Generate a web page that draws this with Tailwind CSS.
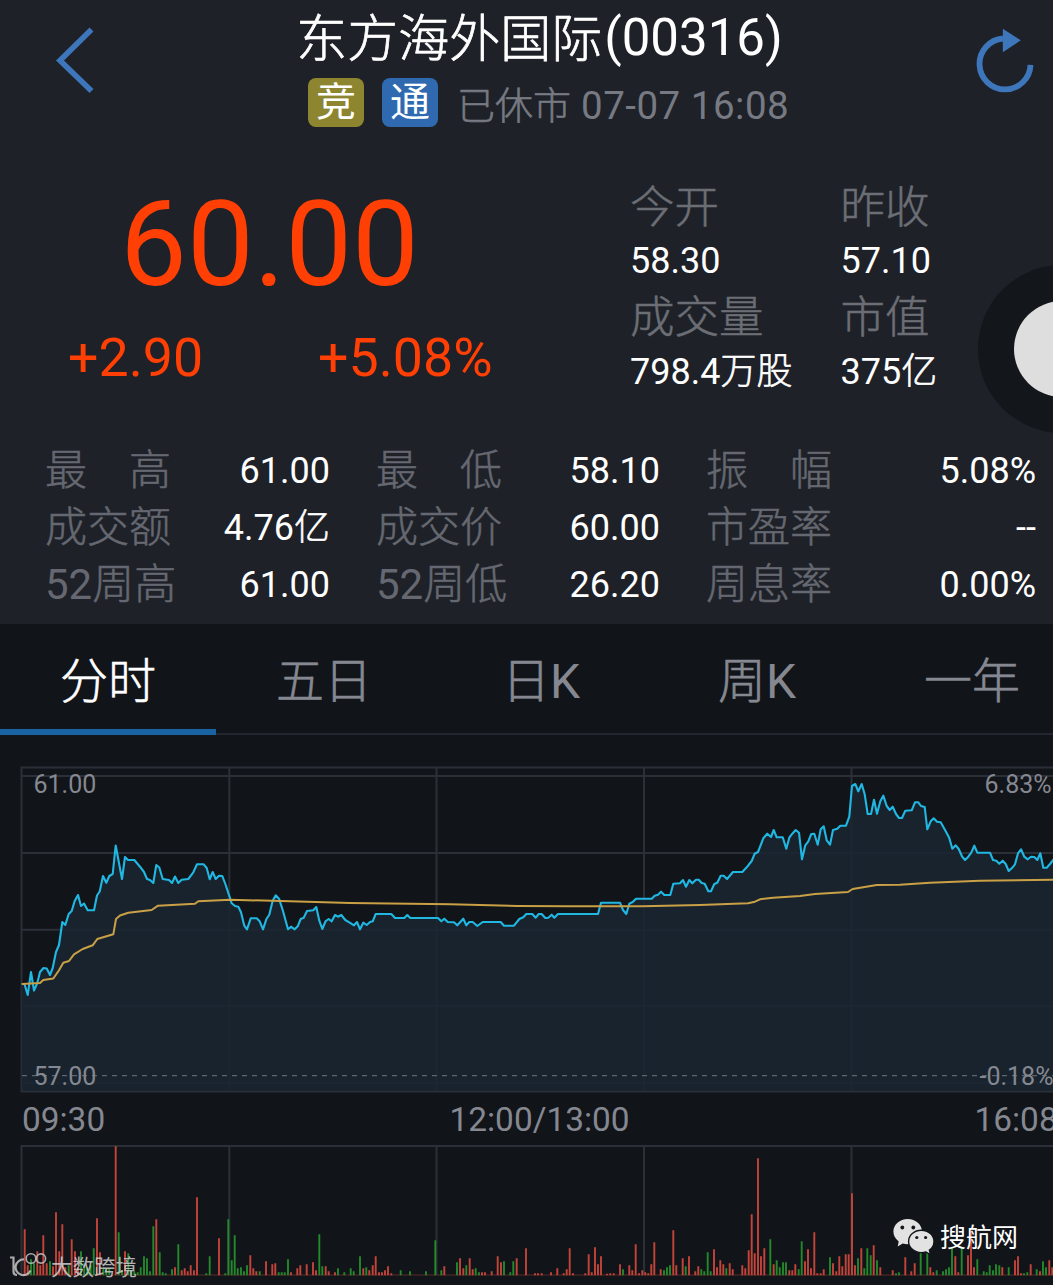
<!DOCTYPE html>
<html lang="zh-CN">
  <head>
    <meta charset="UTF-8" />
    <meta name="viewport" content="width=device-width, initial-scale=1.0" />
    <title>东方海外国际(00316)</title>
    <script src="https://cdn.jsdelivr.net/npm/@tailwindcss/browser@4"></script>
  </head>
  <body class="bg-[#111419] overflow-hidden">
    <div
      class="relative w-[1053px] h-[1285px] overflow-hidden font-[Roboto,'Noto_Sans_CJK_SC',sans-serif] whitespace-nowrap"
    >
      <div class="w-[1080px]">
        <section class="h-[624px] bg-[#1e2128]">
          <!-- Cabecera -->
          <header class="grid grid-cols-[200px_680px_200px] h-[170px]">
            <svg class="w-[120px] h-[120px]" viewBox="0 0 120 120" fill="none" stroke="#3d76ba" stroke-width="5.6">
              <path d="M91.500 29.500 60 60.500l31.500 30.500" />
            </svg>
            <div class="pt-2">
              <h1 class="text-[51px] leading-[60px] text-white text-center font-light pl-px">
                <span class="relative top-0.5 right-0.5 [-webkit-text-stroke:0.7px]">东方海外国际</span><span class="font-normal">(00316)</span>
              </h1>
              <div class="flex items-start pl-[108px] pt-2.5">
                <span class="w-14 h-[49px] rounded-lg bg-[#8e8530] text-white text-[40px] leading-[50px] text-center">竞</span>
                <span class="w-14 h-[49px] rounded-lg bg-[#2f6ab0] text-white text-[40px] leading-[50px] text-center ml-[18px]">通</span>
                <span class="ml-[19px] mt-[3px] text-[38.5px] leading-[50px] text-[#777a82] tracking-[0.5px]"><span class="font-light text-[38px] tracking-normal [-webkit-text-stroke:0.6px]">已休市</span> 07-07 16:08</span>
              </div>
            </div>
            <svg class="w-[173px] h-[120px]" viewBox="880 1.2 173 120" fill="none">
              <path d="M1030.500 66A25.500 25.500 0 1 1 1003 39.700" stroke="#3d76ba" stroke-width="5.800" />
              <path d="M1002.800 30 1020.800 41.500 1002.800 53.500z" fill="#3d76ba" />
            </svg>
          </header>

          <!-- Precio -->
          <div class="flex h-[278px]">
            <div class="w-[630px] text-[#ff3f04]">
              <div class="pl-[120px] pt-[5px] text-[119px] leading-[140px]">60.00</div>
              <div class="flex pt-[13px] pl-[68px] text-[53.7px] leading-[60px]">
                <span class="w-[250px]">+2.90</span>
                <span>+5.08%</span>
              </div>
            </div>
            <div class="grid grid-cols-[210.5px_200px] grid-rows-[54px_56px_54px_56px] items-center content-start pt-[11px] text-[36px] leading-[54px] text-white">
              <span class="text-[44.5px] font-light text-[#6b6e75] [-webkit-text-stroke:0.5px]">今开</span>
              <span class="text-[44.5px] font-light text-[#6b6e75] [-webkit-text-stroke:0.5px]">昨收</span>
              <span class="pb-1">58.30</span>
              <span class="pb-1">57.10</span>
              <span class="text-[44.5px] font-light text-[#6b6e75] [-webkit-text-stroke:0.5px]">成交量</span>
              <span class="text-[44.5px] font-light text-[#6b6e75] [-webkit-text-stroke:0.5px]">市值</span>
              <span class="pb-0.5">798.4<span class="font-light [-webkit-text-stroke:0.6px]">万股</span></span>
              <span class="pb-0.5">375<span class="font-light [-webkit-text-stroke:0.6px]">亿</span></span>
            </div>
          </div>

          <div
            id="stats"
            class="grid grid-cols-[285px_284px_330px] gap-x-[46px] pl-[45px] -mt-[5px] leading-[57px]"
          ></div>
        </section>

        <!-- Pestañas -->
        <nav class="grid grid-cols-5 h-[111px] text-[48px] leading-[115px] text-center font-light text-[#858890] border-b-2 border-[#22262e]">
          <span class="h-[111px] text-white border-b-6 border-[#1a63a3] [-webkit-text-stroke:0.6px]">分时</span>
          <span class="[-webkit-text-stroke:0.6px]">五日</span>
          <span class="pl-0.5"><span class="[-webkit-text-stroke:0.6px]">日</span><span class="font-normal">K</span></span>
          <span class="pl-0.5"><span class="[-webkit-text-stroke:0.6px]">周</span><span class="font-normal">K</span></span>
          <span class="[-webkit-text-stroke:0.6px]">一年</span>
        </nav>

        <svg class="block w-[1053px] h-[550px]" viewBox="0 735 1053 550">
          <g fill="none" stroke="#2b2f38" stroke-width="2">
            <path d="M1060 767.500H21.500V1091.500H1060M21.500 776H1060M21.500 853H1060M21.500 929.700H1060M21.500 1006.300H1060M21.500 1083H1060" />
            <path d="M229.300 767V1091M436.500 767V1091M644 767V1091M851.500 767V1091" />
            <path d="M1060 1146H21.500V1275M229.300 1146V1275M436.500 1146V1275M644 1146V1275M851.500 1146V1275" />
          </g>
          <path id="area" fill="#1a2631" fill-opacity=".88" />
          <path d="M22 1075.700H1053" stroke="#5c666d" stroke-width="1.300" stroke-dasharray="5 5" />
          <polyline id="price" fill="none" stroke="#20b8e2" stroke-width="2.100" stroke-linejoin="round" />
          <polyline id="avg" fill="none" stroke="#c9a045" stroke-width="2" stroke-linejoin="round" />

          <g fill="#858890" font-size="25">
            <text x="33.500" y="792.500">61.00</text>
            <text x="33.500" y="1084.500">57.00</text>
            <text x="984.500" y="792.500">6.83%</text>
            <text x="979.500" y="1084.500">-0.18%</text>
          </g>
          <g fill="#858890" font-size="33.400">
            <text x="22" y="1130.500">09:30</text>
            <text x="449.500" y="1130.500">12:00/13:00</text>
            <text x="974.500" y="1130.500">16:08</text>
          </g>

          <path d="M21.500 1275H1053" stroke="#5a2a2a" stroke-width="1.200" />
          <path id="up" stroke="#c5443a" stroke-width="1.900" />
          <path id="down" stroke="#23892b" stroke-width="1.900" />

          <!-- Marcas de agua -->
          <g fill="none" stroke="#c4c4c4" stroke-opacity=".85" stroke-width="2.200">
            <path d="M10 1257.500h3.500v14q0 3.500 3.500 3.500M24 1259.500a7.800 7.800 0 1 0 6.500 11" />
            <circle cx="31" cy="1258.500" r="4.800" stroke-width="1.600" />
            <circle cx="41" cy="1258.500" r="4.600" stroke-width="1.600" />
          </g>
          <text x="51" y="1274.500" font-size="21.500" fill="#cfcfcf" fill-opacity=".85">大数跨境</text>
          <g fill="#e2e2e2">
            <path d="M907.700 1219c-8 0-14.300 5.600-14.300 12.600 0 4 2 7.400 5.300 9.800l-1 5 5-2.900q2.300.7 5 .7c8 0 14.300-5.600 14.300-12.600s-6.300-12.600-14.300-12.600z" />
            <path stroke="#111419" stroke-width="1.400" d="M921.300 1230.200c-7 0-12.700 5-12.700 11.200s5.700 11.200 12.700 11.200q2.400 0 4.600-.7l4.600 2.600-1.100-4.400c2.800-2 4.600-5.200 4.600-8.700 0-6.200-5.700-11.200-12.700-11.200z" />
          </g>
          <g fill="#15181d">
            <circle cx="902.300" cy="1227.500" r="1.900" /><circle cx="913.300" cy="1227.500" r="1.900" />
            <circle cx="916.800" cy="1237.500" r="1.600" /><circle cx="925.600" cy="1237.500" r="1.600" />
          </g>
          <text x="940" y="1247" font-size="26" fill="#fff">搜航网</text>
        </svg>
      </div>

      <!-- Botón flotante -->
      <div class="absolute left-[978px] top-[265px] size-[168px] rounded-full bg-[#13161b] flex items-center justify-center">
        <div class="size-24 rounded-full bg-[#dedede]"></div>
      </div>
    </div>

    <script>
      const stats = [
        ["最　高", "61.00"], ["最　低", "58.10"], ["振　幅", "5.08%"],
        ["成交额", "4.76亿"], ["成交价", "60.00"], ["市盈率", "--"],
        ["52周高", "61.00"], ["52周低", "26.20"], ["周息率", "0.00%"],
      ];
      const light = (s) =>
        s.replace(/[^\x00-\x7f]+/g, (m) => `<span class="font-light [-webkit-text-stroke:0.5px]">${m}</span>`);
      document.getElementById("stats").innerHTML = stats
        .map(
          ([label, value]) => `
          <div class="flex justify-between h-[57px]">
            <span class="-mt-px text-[42px] text-[#656870]">${light(label)}</span>
            <span class="text-[36px] text-white">${light(value)}</span>
          </div>`
        )
        .join("");

      const price =
        "21.7,984 24.5,984 27.7,995 31,972 34,990.5 37.3,983 40,972 43.5,968 46.7,968.5 50,975 52.7,968 56,952 59,945 62.3,922 65.3,925 68.7,914 71.7,911 74.7,901 78,895 81,906 84,903.5 87.7,910.3 94,910.3 97,895.5 99.7,891.5 103,876 106.3,882.7 109.3,876 112.7,874 115.7,845.5 122,879 125,857 128,860 134.3,860 140,866.7 144,872 147,879 150,880 153.3,883 156.3,865 159.3,867.5 162.7,879 169,880 172,883 175,876.5 178.3,883 181.7,879.7 188.3,879 193.3,872.3 197,864.3 203.7,864.3 206.7,868 209.7,879.3 212.7,872 215.7,879 219,875.7 222.3,876 225.7,885 231.7,903.3 235,906 238.3,906.7 241,912.3 244.3,925.7 247,929.3 250.7,918.3 256.7,918.3 259.7,921.3 263,929.3 266.3,919.3 269.3,914.7 272.7,900.7 275.7,895.3 279,898.7 282.7,910 288,929.3 291,926.7 294.7,929.3 297.7,926.3 300.7,919 303.7,917.7 307,911 313.3,910.3 316.3,907 319.3,920.7 322.3,929 325.7,921 328.7,919 331.7,921.3 335,915 338,916.7 341.3,915 345.3,920 349.3,922.3 " +
        "354,925.3 357,922 360,929.3 363.3,922.7 366.7,925 370,922 372.7,921.3 375.7,914 391.3,914 395,918 404.3,918 407.3,915 410.3,918 438,918 441.3,921.3 444.3,918.7 447.7,922 454,922.3 457.3,925.3 463.3,918.7 466.3,925.3 469.3,922 472.7,922 477.3,926 482.7,922 500.7,922 504,925.7 514,925.7 519.3,919 523.3,917.3 526.3,914 532.3,914 535.7,917.7 538.7,914 541.7,914 545.3,918 548.3,917.7 551.7,914.7 554.3,917.7 558,914 598,914 601,902.7 620,902.7 623,910 626.3,914 629.3,903.7 632.7,902 636,898.7 651.7,898.7 654.7,895.7 658,894.7 661,891.7 664.3,895 670.3,895 673.3,883.7 680,883.3 683,880 686,886.7 689.3,880 692.3,883.3 696,879.7 698.7,879.7 " +
        "701.7,883 704.7,883.7 708.3,891.3 711,891.3 714.3,884 717.3,882.7 720.7,875.7 723.7,875.7 727,879 733,872 742.3,872 746.7,867.3 751.7,861 754.7,853.7 758,852 763.3,838.3 767.3,833.7 771,837 773.7,830 776.7,837.3 782.7,837.3 786.3,848.7 789.3,837.7 792.3,833.7 795.7,830 799,832.7 802,859.3 805.3,845.3 808.3,841.3 811.3,834 814.3,833.7 817.7,844.7 820.7,829.3 823.7,826.3 826.7,840.3 830,844.7 833,830 837.3,828.7 840.3,825.7 846,825.7 849.3,816.7 852,786 855.3,784 858.3,791.3 861.7,784 864.7,794.3 867.7,814 871,814 874,799.7 877,813.7 880.3,801.3 883.3,795.7 886.7,806 889.7,810 892.7,806.7 896,814 899,818 902,818 905.3,810.7 911.7,810.3 915,802.3 918.3,802.3 921,806 924.7,807 927.3,829.3 930.7,821.3 933.7,818.3 937,821.7 940.7,822.3 946,831.7 949.3,838 952.3,848.7 955.7,845.3 958.7,849 962,856.3 965,860 968.3,856.7 971.3,852.7 974.3,845.7 977.3,852.7 990,852.7 993,860 996.3,860.7 999.3,863.7 1002.7,860.7 1005.7,864 1008.7,871 1011.7,868.3 1015,864.3 1018,853.3 1021,849.3 1024.3,856.7 1027.7,859.3 1031,856.7 1034.3,857 1037.3,860 1040.3,853.3 1043.3,867.7 1046.7,867.7 1050,864 1054,859";
      const avg =
        "21.7,984 40,983 43.3,980 53.3,978.5 59,970.3 63.3,962.7 69,961 74,954.3 82.7,949 92.7,945.3 97.3,939 113.3,934.3 116,919 120,915.5 128.3,912.7 151.7,910 158,905.7 195,903.7 198.3,901.3 230,899.7 290,901.3 350,903 450,904.3 517,906 567,906.3 643,906.3 700,905 748,903.3 755,901.7 760,899.3 773,897.7 800,896 815,894 848,892 852.7,889 876.7,885 900,884.7 930,882.7 980,880.7 1054,879.7";
      document.getElementById("price").setAttribute("points", price);
      document.getElementById("avg").setAttribute("points", avg);
      document.getElementById("area").setAttribute("d", `M21.7 1091L${price}L1054 1091z`);

      // volumen por minuto: x,altura
      const up =
        "24.7,46 27.7,10 37.3,24 40.3,10 43.3,40 46.7,12 53,9 56,63 59.3,24 62.3,51 65.3,8 71.7,36 75,24 78,8 97,57 100,23 115.7,129 125,24 156.3,56 175,8 181.7,5 184.7,7 187.7,4 190.7,10 194,5 197,78 219,37 250.3,20 253.3,7 256.3,4 266,14 272.3,11 275.3,12 291,3 297.3,7 300.3,10 306.7,11 313,13 316,5 325.7,9 328.7,4 335,3 " +
        "363.3,7 369.3,5 372.7,10 375.7,19 379,3 382,3 385,5 388,9 391.3,2 444.3,9 460,17 463.3,7 469.7,17 472.7,6 482,3 485,3 491.7,4 497.7,19 501,13 516.7,17 526,27 535,2 538,2 541.7,2 551,3 557.3,7 563.7,2 566.7,6 569.7,27 573,2 585.3,2 588.7,21 591.7,3 595,28 598,11 601,19 607,1.5 610.3,2 613.7,2 620,11 629.3,10 632.3,5 635.7,31 639,2 642.3,5 645.3,3 648.3,2 651.3,11 654.3,33 660.7,6 673.3,45 676.3,10 682.7,17 689,19 695.3,4 698.3,9 " +
        "714,26 717,8 720.3,15 723.3,11 729.7,12 732.7,6 742.3,10 745.3,7 748.7,25 751.7,61 754.7,22 758,117 761,19 764.3,27 773.7,11 789.3,5 792.3,5 795.3,11 805,14 808,26 811,7 814.3,43 817.3,2 820.7,2 823.7,6 833,12 836.3,4 839.3,19 842.3,9 845.7,21 848.7,21 852,82 855,10 861.3,27 873.7,30 880.3,8 892.7,5 905.3,18 911.3,4 914.7,12 930.3,8 933.3,3 955.3,19 958.3,3 968,20 971,45 974,8 1002.3,8 1015,15 1018,19 1021,2 1030.7,11 1040,4 1049.3,15 1052.3,8";
      const down =
        "31,16 34,12 50,14 68.7,10 81,24 84.3,12 87.3,8 90.7,10 93.7,27 103.3,8 106.3,6 109.3,7 118.7,43 122,5 128.3,22 131.3,5 134.3,4 137.7,3 140.7,8 144,19 147,17 150,4 153.3,49 159.7,23 162.7,3 165.7,2 172,6 178.3,31 206.3,2 209.7,19 225.3,2 228.3,56 231.7,15 234.7,40 237.7,7 241,8 244,4 247,10 259.7,4 278.7,3 281.7,3 284.7,3 288,16 319.3,41 322.3,9 338,7 344.3,3 " +
        "350.7,7 353.7,4 360,19 366.3,8 400.7,5 410,4 426,4 435.3,35 441.3,5 457,13 466.3,10 475.7,7 479,3 504,14 510.3,3 513.3,14 623,6 664,5 667,8 670,10 685.7,9 " +
        "701.3,6 704.3,4 707.7,23 710.7,4 726.3,7 770.3,36 776.7,15 779.7,8 783,13 786,13 798.7,6 801.7,34 830,18 858,17 864.3,7 867.3,27 870.7,20 877,15 896,2 899,3 920.7,23 927.3,23 936.7,5 943,4 946,6 949,8 952,27 961.7,27 977.3,16 983.7,4 986.7,3 989.7,10 993,5 996,11 999.3,10 1008.7,8 1024,2 1027.3,3 1036.7,6 1043,14 1046,8";
      const bars = (data) =>
        data.split(" ").map((p) => { const [x, h] = p.split(","); return `M${x} 1275.300v-${h}`; }).join("");
      document.getElementById("up").setAttribute("d", bars(up));
      document.getElementById("down").setAttribute("d", bars(down));
    </script>
  </body>
</html>
